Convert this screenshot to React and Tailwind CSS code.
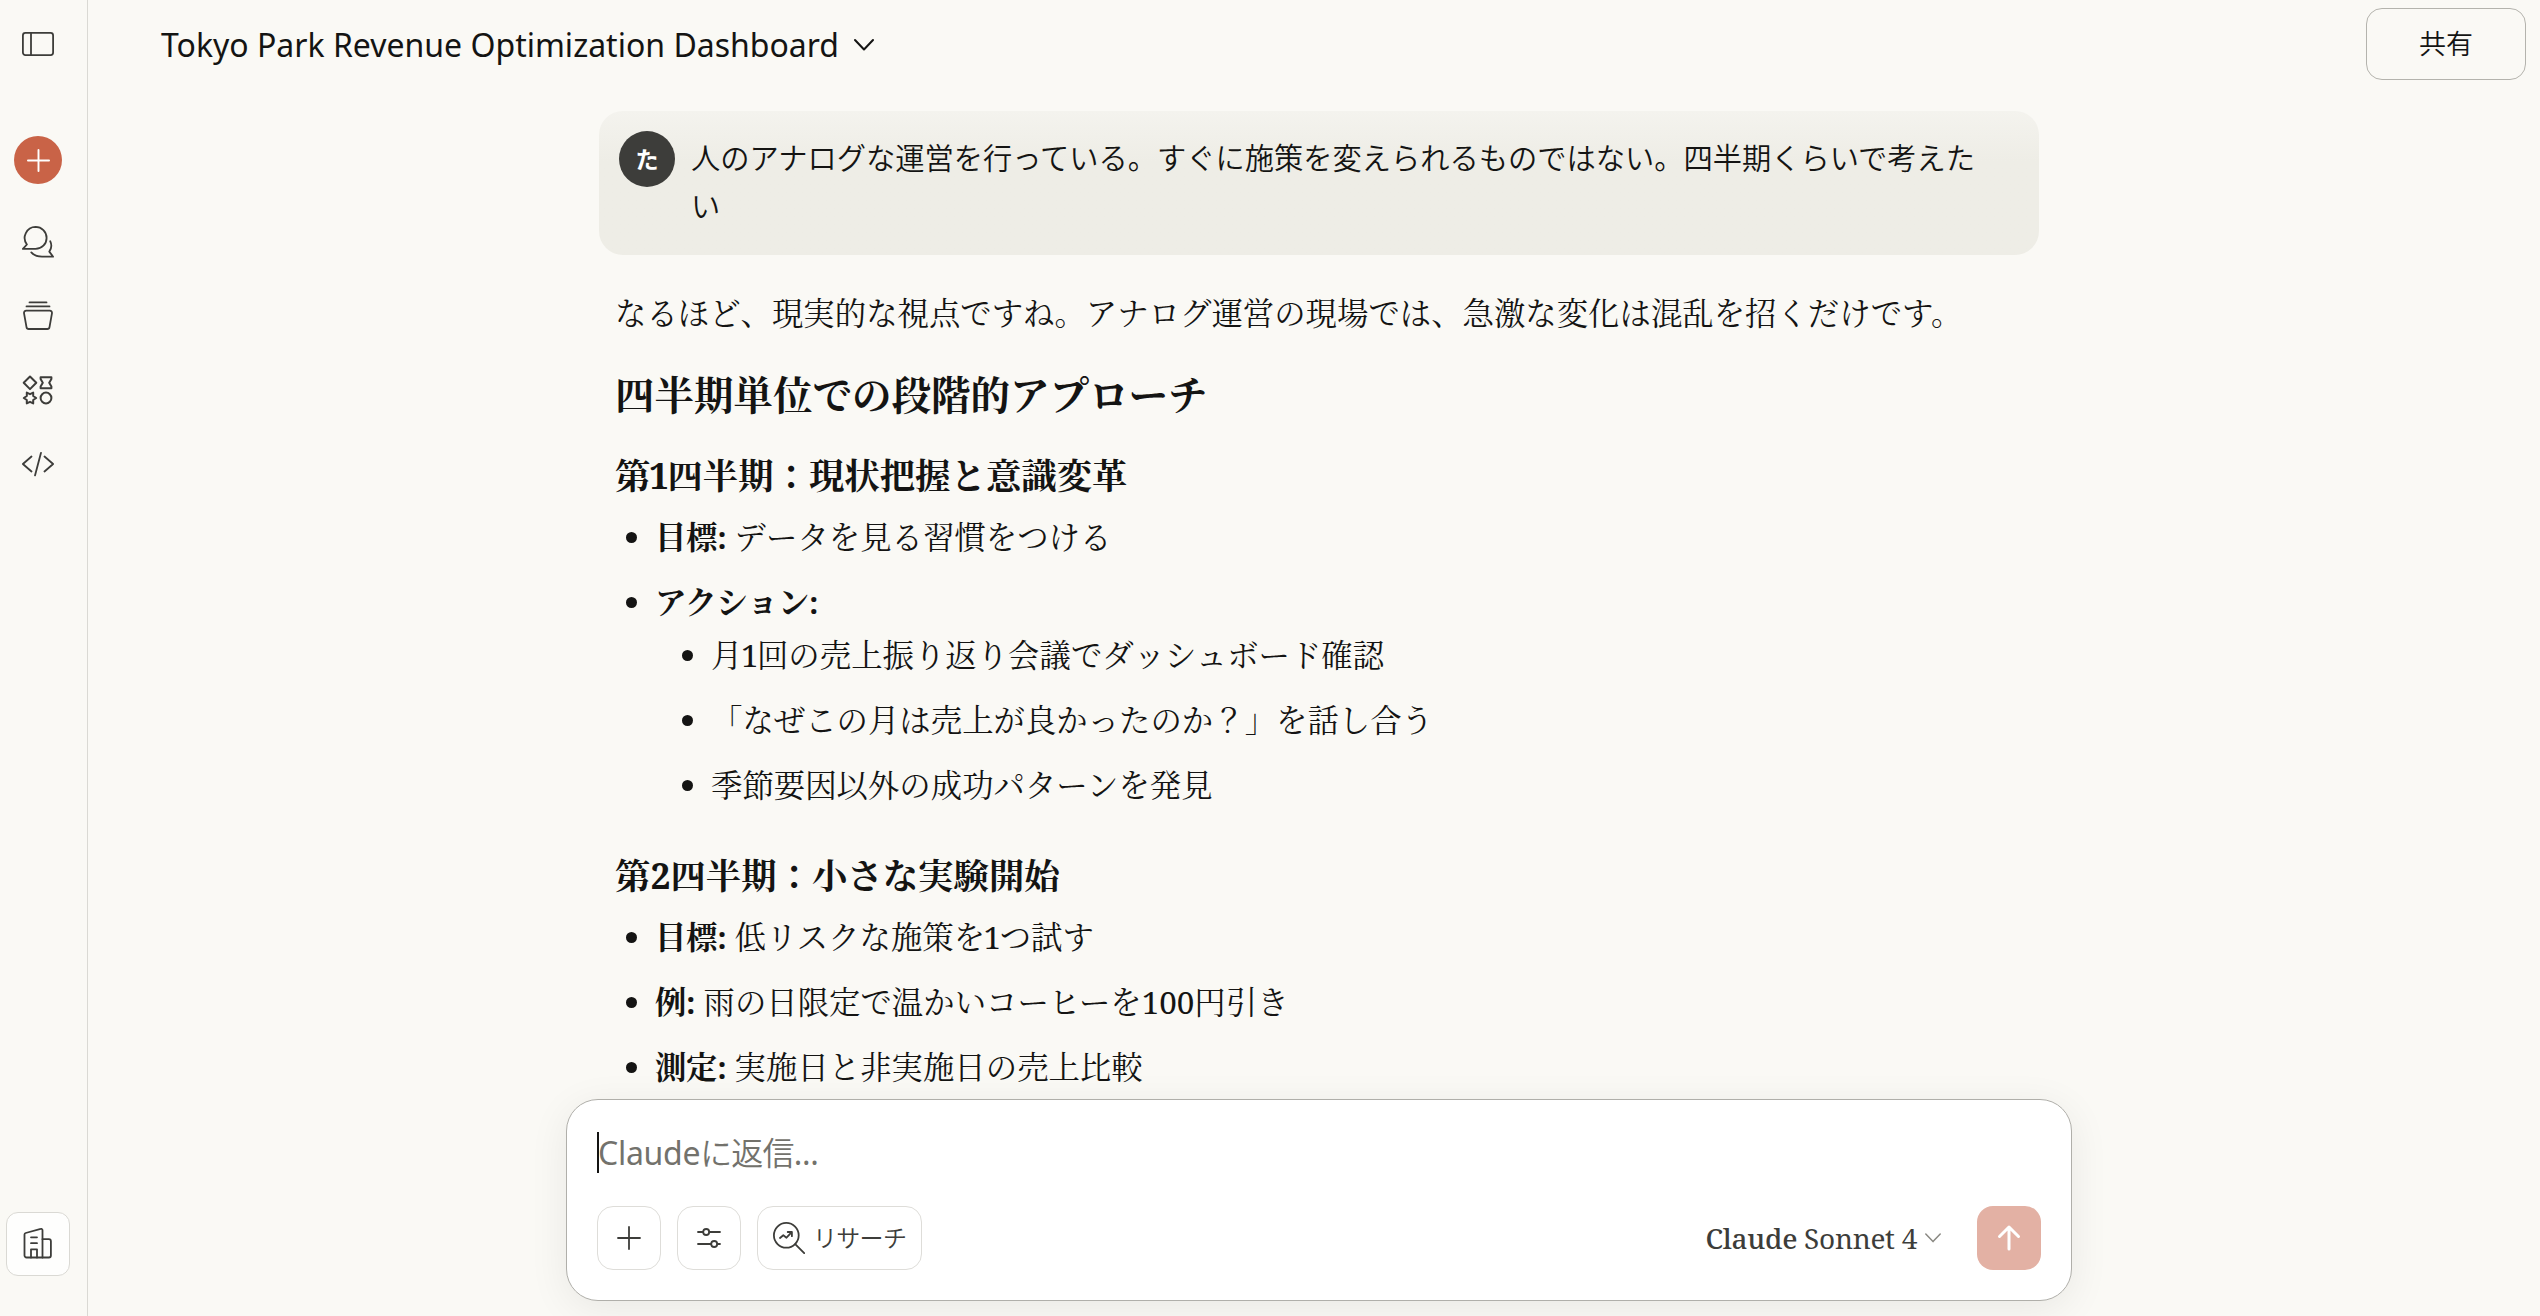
const quarters = [
  {
    title: '第1四半期：現状把握と意識変革',
    items: [
      { label: '目標:', text: 'データを見る習慣をつける' },
      {
        label: 'アクション:',
        children: [
          '月1回の売上振り返り会議でダッシュボード確認',
          '「なぜこの月は売上が良かったのか？」を話し合う',
          '季節要因以外の成功パターンを発見',
        ],
      },
    ],
  },
  {
    title: '第2四半期：小さな実験開始',
    items: [
      { label: '目標:', text: '低リスクな施策を1つ試す' },
      { label: '例:', text: '雨の日限定で温かいコーヒーを100円引き' },
      { label: '測定:', text: '実施日と非実施日の売上比較' },
    ],
  },
];

function Icon({ size = 32, box = 32, stroke = 1.8, className = '', children }) {
  return (
    <svg
      width={size}
      height={size}
      viewBox={`0 0 ${box} ${box}`}
      fill="none"
      stroke="currentColor"
      strokeWidth={stroke}
      strokeLinecap="round"
      strokeLinejoin="round"
      className={`shrink-0 ${className}`}
    >
      {children}
    </svg>
  );
}

const PanelIcon = () => (
  <Icon>
    <rect x="0.9" y="4.9" width="30.2" height="22.2" rx="2.5" />
    <path d="M9 5v22" />
  </Icon>
);

const ChatsIcon = () => (
  <Icon>
    <path d="M13.6 0.9a11 11 0 0 1 0 22H0.9l4-4.4A11 11 0 0 1 13.6 0.9z" />
    <path d="M28.2 15.2c1.7 3.6 1.4 7.3-.9 10.4l3.8 5.1H20c-4.7 0-8-1.3-10.7-4.3" />
  </Icon>
);

const ProjectsIcon = () => (
  <Icon>
    <path d="M7.5 2.400h17M4.500 6.400h23" />
    <path d="M4.200 10.600h23.600a2.200 2.200 0 0 1 2.200 2.500l-2.500 14a2.200 2.200 0 0 1-2.200 1.900H6.700a2.200 2.200 0 0 1-2.200-1.900L2 13.100a2.200 2.200 0 0 1 2.200-2.500z" />
  </Icon>
);

const ArtifactsIcon = () => (
  <Icon stroke={2}>
    <path d="M8 2.500 14.300 8.800 8 15.100 1.700 8.800z" />
    <path d="M18.600 3.300h10.800v1.800l-2.200 3.700 2.200 3.700v1.800H18.600v-1.800l2.200-3.700-2.200-3.700z" />
    <path d="m4.800 18.600 3.200 1.600 3.200-1.600v3.400l3 2-3 2v3.400L8 27.800l-3.200 1.600V26l-3-2 3-2z" />
    <circle cx="24" cy="24" r="5.400" />
  </Icon>
);

const CodeIcon = () => (
  <Icon>
    <path d="M9.500 8.500.9 16l8.600 7.500M22.500 8.500l8.600 7.500-8.600 7.500M19 4.800l-6 22.600" />
  </Icon>
);

const BuildingIcon = () => (
  <Icon>
    <path d="M20.500 29.500H4.500a2 2 0 0 1-2-2V6.500a1.600 1.600 0 0 1 1.200-1.500L18.700.9a1.400 1.400 0 0 1 1.800 1.400z" />
    <path d="M20.500 11.200h6.400a2 2 0 0 1 2 2v14.300a2 2 0 0 1-2 2h-6.400M9 9.300h6M9 15.200h6M9 29.500v-8.200h6v8.200" />
  </Icon>
);

const PlusIcon = ({ size = 24, stroke = 2 }) => (
  <Icon size={size} box={24} stroke={stroke}>
    <path d="M12 1v22M1 12h22" />
  </Icon>
);

const SlidersIcon = () => (
  <Icon size={24} box={24}>
    <path d="M1 6h5M12.200 6H23M1 18h13M20.200 18H23" />
    <circle cx="9.200" cy="6" r="3" />
    <circle cx="17.200" cy="18" r="3" />
  </Icon>
);

const ResearchIcon = () => (
  <Icon>
    <circle cx="13.300" cy="13.300" r="12.400" />
    <path d="m22.200 22.200 9 9M7 16l3.300-2.800 3.200 2.500 5-5.300M14.700 10h4.200v4.200" />
  </Icon>
);

const SendIcon = () => (
  <Icon stroke={3}>
    <path d="M16 27V5M6.500 14.500 16 5l9.500 9.500" />
  </Icon>
);

function Bullet() {
  return <span className="mt-[22px] size-[11px] shrink-0 rounded-full bg-[#141413]" />;
}

// A lone "1" sits tighter against the kanji than the font's tabular figure
function Tight({ children }) {
  return children.split(/(1(?!0))/).map((part, i) =>
    part === '1' ? <span key={i} className="-mx-[1.5px]">1</span> : part
  );
}

function Sidebar() {
  return (
    <aside className="flex w-[88px] shrink-0 flex-col border-r border-[#dad9d4] text-[#3d3d3a]">
      <div className="flex w-[76px] flex-1 flex-col items-center pt-7">
        <PanelIcon />
        <button className="mt-[76px] flex size-12 items-center justify-center rounded-full bg-[#c96347] text-white">
          <PlusIcon size={23} />
        </button>
        <nav className="mt-[42px] flex flex-col gap-[42px]">
          <ChatsIcon />
          <ProjectsIcon />
          <ArtifactsIcon />
          <CodeIcon />
        </nav>
        <button className="mt-auto mb-[40px] flex size-16 items-center justify-center rounded-xl border border-[#dad9d4] bg-[#fefefd]">
          <BuildingIcon />
        </button>
      </div>
    </aside>
  );
}

function Header() {
  return (
    <header className="flex h-[88px] shrink-0 items-center justify-between pr-[14px] pl-[73px]">
      <button className="flex items-center gap-[15px] pt-px text-[32px]">
        Tokyo Park Revenue Optimization Dashboard
        <Icon size={20} box={20} stroke={2}>
          <path d="m1 5 9 9.500L19 5" />
        </Icon>
      </button>
      <button className="h-[72px] w-[160px] rounded-2xl border border-[#b4b3ad] text-[27px] font-[350]">共有</button>
    </header>
  );
}

function UserMessage() {
  return (
    <div className="ml-[-16px] flex h-[144px] w-[1440px] gap-4 rounded-3xl bg-linear-to-b from-[#f4f3ee] to-[#eeede6] to-35% pt-5 pl-5">
      <div className="flex size-14 shrink-0 items-center justify-center rounded-full bg-[#3d3d3a] text-[23px] font-bold text-white">
        た
      </div>
      <p className="w-[1300px] pt-[3px] text-[29.25px] leading-[48px] font-[350]">
        人のアナログな運営を行っている。すぐに施策を変えられるものではない。四半期くらいで考えたい
      </p>
    </div>
  );
}

function Quarter({ title, items, className = '' }) {
  return (
    <section className={className}>
      <h3 className="text-[35.4px] leading-[48px] font-bold">
        <Tight>{title}</Tight>
      </h3>
      <ul className="mt-[11px] flex flex-col gap-3">
        {items.map((item) => (
          <li key={item.label} className="flex gap-[18px] pl-[11px]">
            <Bullet />
            <div>
              <p className="leading-[53px]">
                <strong className="font-bold tracking-[-0.3px]">{item.label}</strong>{' '}
                {item.text && <Tight>{item.text}</Tight>}
              </p>
              {item.children && (
                <ul className="flex flex-col gap-3 pl-[27px]">
                  {item.children.map((text) => (
                    <li key={text} className="flex gap-[18px] leading-[53px]">
                      <Bullet />
                      <span>
                        <Tight>{text}</Tight>
                      </span>
                    </li>
                  ))}
                </ul>
              )}
            </div>
          </li>
        ))}
      </ul>
    </section>
  );
}

function Reply() {
  return (
    <article className='mt-[31px] font-["Noto_Serif","Noto_Serif_CJK_JP","Noto_Sans_CJK_JP",serif] text-[31.4px]'>
      <p className="leading-[53px]">
        なるほど、現実的な視点ですね。アナログ運営の現場では、急激な変化は混乱を招くだけです。
      </p>
      <h2 className="mt-[28px] text-[39.5px] leading-[56px] font-bold">四半期単位での段階的アプローチ</h2>
      <Quarter {...quarters[0]} className="mt-[28px]" />
      <Quarter {...quarters[1]} className="mt-[40px]" />
    </article>
  );
}

function Composer() {
  return (
    <div className="absolute top-[1099px] left-[566px] flex h-[202px] w-[1506px] flex-col rounded-[32px] border border-[#b0afaa] bg-white pt-8 pr-[30px] pl-[30px] shadow-[0_8px_40px_rgba(0,0,0,0.07)]">
      <div className="flex h-[41px] items-center text-[32px] text-[#73726c]">
        <span className="-mr-px h-[41px] w-[2px] shrink-0 bg-[#141413]" />
        <span className="tracking-[-0.3px]">
          Claude<span className="font-[350] tracking-[-0.8px]">に返信</span>...
        </span>
      </div>
      <div className="mt-[33px] flex items-center gap-4 text-[#3d3d3a]">
        <button className="flex size-16 items-center justify-center rounded-2xl border border-[#deddd9]">
          <PlusIcon stroke={1.8} />
        </button>
        <button className="flex size-16 items-center justify-center rounded-2xl border border-[#deddd9]">
          <SlidersIcon />
        </button>
        <button className="flex h-16 w-[165px] items-center gap-2 rounded-2xl border border-[#deddd9] pl-[15px] text-[24px] font-[350] tracking-[-0.7px]">
          <ResearchIcon />
          リサーチ
        </button>
        <button className='ml-auto flex items-center font-["Noto_Serif",serif] text-[28px] tracking-[-0.3px]'>
          <span className="font-medium">Claude</span>
          <span className="ml-[7px]">Sonnet 4</span>
          <Icon size={16} box={16} stroke={1.5} className="ml-2 text-[#8a8983]">
            <path d="m.8 4 7.200 7.600L15.200 4" />
          </Icon>
        </button>
        <button className="ml-5 flex size-16 items-center justify-center rounded-2xl bg-[#e3b1a4] text-white">
          <SendIcon />
        </button>
      </div>
    </div>
  );
}

export default function App() {
  return (
    <div className='relative flex h-[1316px] w-[2540px] overflow-hidden bg-[#faf9f5] font-["Noto_Sans","Noto_Sans_CJK_JP",sans-serif] text-[#141413]'>
      <Sidebar />
      <div className="flex min-w-0 flex-1 flex-col">
        <Header />
        <main className="mt-[23px] ml-[527px] w-[1424px]">
          <UserMessage />
          <Reply />
        </main>
      </div>
      <Composer />
    </div>
  );
}
